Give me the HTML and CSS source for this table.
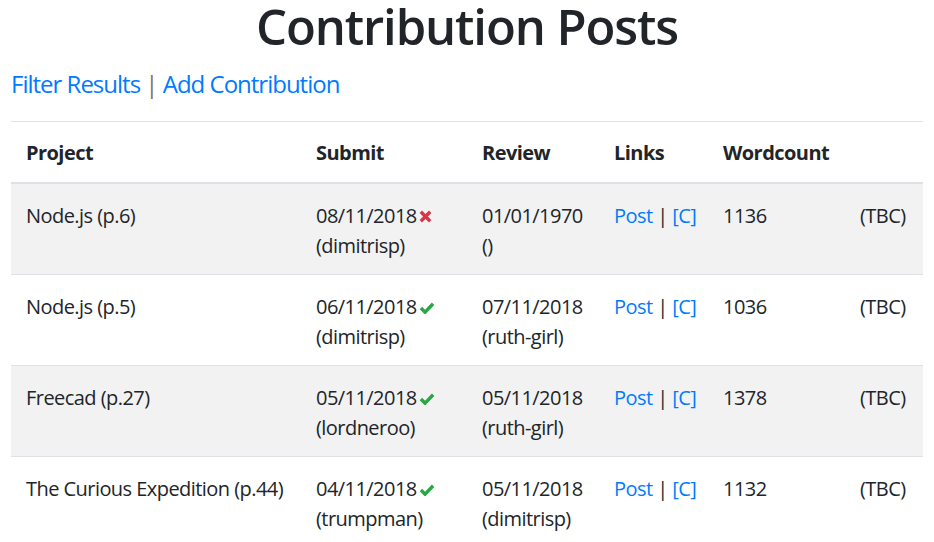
FILE: index.html
```html
<!DOCTYPE html>
<html lang="en">
<head>
<meta charset="utf-8">
<title>Contribution Posts</title>
<link rel="stylesheet" href="styles.css">
</head>
<body>
<div class="container">
  <h1 class="title">Contribution Posts</h1>
  <p class="actions"><a href="#">Filter Results</a> <span class="sep">|</span> <a href="#">Add Contribution</a></p>
  <table class="posts">
    <colgroup>
      <col class="c-project"><col class="c-submit"><col class="c-review"><col class="c-links"><col class="c-words"><col class="c-tbc">
    </colgroup>
    <thead>
      <tr><th>Project</th><th>Submit</th><th>Review</th><th>Links</th><th>Wordcount</th><th></th></tr>
    </thead>
    <tbody>
      <tr class="striped">
        <td>Node.js (p.6)</td>
        <td>08/11/2018<svg class="icon icon-x" viewBox="0 0 16 16"><path d="M3 3 L13 13 M13 3 L3 13"/></svg><br>(dimitrisp)</td>
        <td>01/01/1970<br>()</td>
        <td><a href="#">Post</a> | <a href="#">[C]</a></td>
        <td>1136</td>
        <td>(TBC)</td>
      </tr>
      <tr>
        <td>Node.js (p.5)</td>
        <td>06/11/2018<svg class="icon icon-ok" viewBox="0 0 18 16"><path d="M2.5 8.5 L7 13 L15.5 4"/></svg><br>(dimitrisp)</td>
        <td>07/11/2018<br>(ruth-girl)</td>
        <td><a href="#">Post</a> | <a href="#">[C]</a></td>
        <td>1036</td>
        <td>(TBC)</td>
      </tr>
      <tr class="striped">
        <td>Freecad (p.27)</td>
        <td>05/11/2018<svg class="icon icon-ok" viewBox="0 0 18 16"><path d="M2.5 8.5 L7 13 L15.5 4"/></svg><br>(lordneroo)</td>
        <td>05/11/2018<br>(ruth-girl)</td>
        <td><a href="#">Post</a> | <a href="#">[C]</a></td>
        <td>1378</td>
        <td>(TBC)</td>
      </tr>
      <tr>
        <td>The Curious Expedition (p.44)</td>
        <td>04/11/2018<svg class="icon icon-ok" viewBox="0 0 18 16"><path d="M2.5 8.5 L7 13 L15.5 4"/></svg><br>(trumpman)</td>
        <td>05/11/2018<br>(dimitrisp)</td>
        <td><a href="#">Post</a> | <a href="#">[C]</a></td>
        <td>1132</td>
        <td>(TBC)</td>
      </tr>
    </tbody>
  </table>
</div>
</body>
</html>
```
FILE: styles.css
```css
html, body {
  margin: 0;
  padding: 0;
  background: #fff;
}
body {
  font-family: "Open Sans", "Noto Sans", sans-serif;
  font-size: 20px;
  line-height: 30px;
  letter-spacing: -0.55px;
  color: #212529;
}
.container {
  padding: 0 11px;
}
.title {
  margin: 0;
  padding: 0;
  text-align: center;
  font-size: 49px;
  line-height: 52px;
  letter-spacing: -1.1px;
  font-weight: 600;
  color: #212529;
}
.actions {
  margin: 17px 0 22px;
  font-size: 24px;
  line-height: 30px;
  letter-spacing: -1px;
  color: #7d7463;
}
a {
  color: #007bff;
  text-decoration: none;
}
.posts {
  width: 912px;
  border-collapse: collapse;
  table-layout: fixed;
}
.c-project { width: 290px; }
.c-submit { width: 166px; }
.c-review { width: 132px; }
.c-links { width: 109px; }
.c-words { width: 137px; }
.c-tbc { width: 78px; }
.posts th, .posts td {
  padding: 16px 15px 14px;
  text-align: left;
  vertical-align: top;
  border-top: 1px solid #dee2e6;
  white-space: nowrap;
}
.posts td {
  padding-top: 17px;
  padding-bottom: 13px;
}
.posts th {
  font-weight: 700;
  border-bottom: 2px solid #dee2e6;
}
.posts tr.striped td {
  background: #f2f2f2;
}
.icon {
  height: 15px;
  vertical-align: -1px;
  margin-left: 1px;
  fill: none;
  stroke-width: 3.6;
}
.icon-x {
  width: 15px;
  stroke: #dc3545;
}
.icon-ok {
  width: 18px;
  stroke: #28a745;
  stroke-linejoin: round;
}
```
